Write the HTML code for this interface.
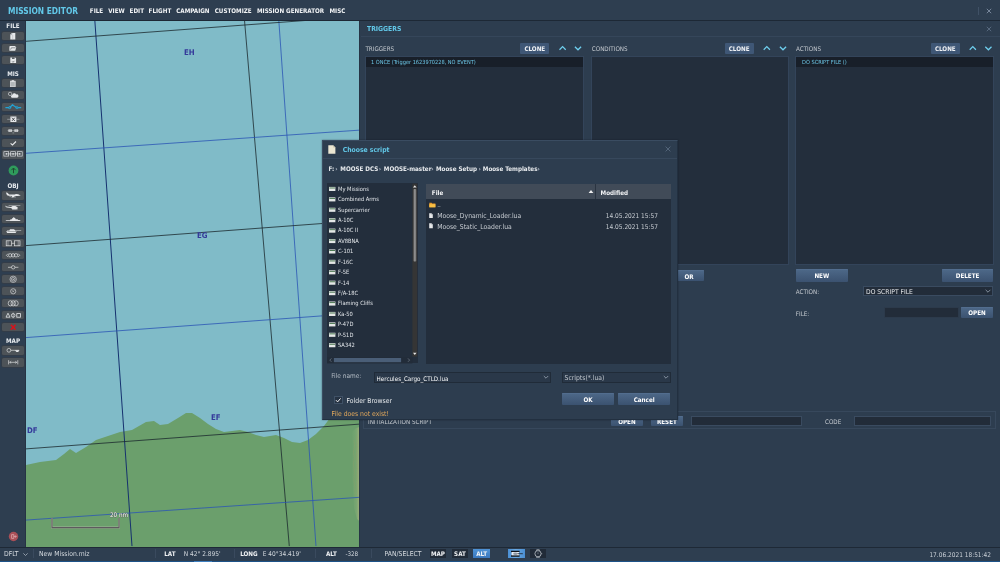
<!DOCTYPE html>
<html lang="en"><head><meta charset="utf-8"><title>Mission Editor</title>
<style>
*{box-sizing:border-box;margin:0;padding:0}
html,body{width:1000px;height:562px;overflow:hidden;background:#2e3e50;}
body{font-family:"DejaVu Sans Condensed","DejaVu Sans","Liberation Sans",sans-serif;font-stretch:condensed;color:#fff;position:relative;font-size:6.25px;line-height:1}
#root{position:absolute;left:0;top:0;width:1000px;height:562px;overflow:hidden;will-change:transform}
.a{position:absolute;white-space:nowrap}
.b{font-weight:bold}
.t{position:absolute;white-space:nowrap;line-height:10px;height:10px}
.sb{position:absolute;left:1.7px;width:22.2px;height:8.5px;background:#4d5358;border-radius:1.6px;box-shadow:0 0 0 .7px #363d45}
.sb svg{position:absolute;left:0;top:0;width:22.2px;height:8.5px}
.sl{position:absolute;left:0;width:26px;text-align:center;font-weight:bold;font-size:6.25px;line-height:8px;color:#e8ecf0}
.btn{position:absolute;background:linear-gradient(#4e6989,#3b5270);box-shadow:inset 0 .6px 0 #587394;color:#fff;font-weight:bold;text-align:center;font-size:6.25px;border-radius:1px}
.clone{position:absolute;background:#3f5776;color:#f0f2f5;font-weight:bold;text-align:center;font-size:6.25px;height:10.6px;line-height:12px;width:29px;border-radius:1px}
.lb{position:absolute;background:#232e3c;border:.8px solid #33445a}
.inp{position:absolute;background:#222c39;border:1px solid #3a4b60}
.lab{position:absolute;color:#c3c8ce;font-size:6.25px;white-space:nowrap;line-height:8px}
</style></head>
<body>
<div id="root">
<div class="a" style="left:0;top:0;width:1000px;height:21px;background:#2e3e50;border-bottom:1.5px solid #1d2835"></div>
<div class="a b" style="left:8px;top:5.5px;font-size:8.33px;line-height:10px;color:#62c8e8">MISSION EDITOR</div>
<div class="a b" style="left:89.8px;top:6.6px;font-size:6.25px;line-height:8px;color:#f2f4f6">FILE</div>
<div class="a b" style="left:108.2px;top:6.6px;font-size:6.25px;line-height:8px;color:#f2f4f6">VIEW</div>
<div class="a b" style="left:129.6px;top:6.6px;font-size:6.25px;line-height:8px;color:#f2f4f6">EDIT</div>
<div class="a b" style="left:148.6px;top:6.6px;font-size:6.25px;line-height:8px;color:#f2f4f6">FLIGHT</div>
<div class="a b" style="left:176.2px;top:6.6px;font-size:6.25px;line-height:8px;color:#f2f4f6">CAMPAIGN</div>
<div class="a b" style="left:214.7px;top:6.6px;font-size:6.25px;line-height:8px;color:#f2f4f6">CUSTOMIZE</div>
<div class="a b" style="left:257px;top:6.6px;font-size:6.25px;line-height:8px;color:#f2f4f6">MISSION GENERATOR</div>
<div class="a b" style="left:329.5px;top:6.6px;font-size:6.25px;line-height:8px;color:#f2f4f6">MISC</div>
<div class="a" style="left:978px;top:7.4px;width:1px;height:7.6px;background:#405166"></div>
<svg class="a" style="left:985.4px;top:7.4px" width="8" height="8" viewBox="0 0 8 8"><path d="M1.8 1.8L6.2 6.2M6.2 1.8L1.8 6.2" stroke="#8595aa" stroke-width="0.85" fill="none"/></svg>
<svg class="a" style="left:26px;top:20.9px" width="333.3" height="525.7" viewBox="26 20.9 333.3 525.7">
<rect x="26" y="20" width="334" height="527" fill="#80bbc8"/>
<path d="M26 464.8 L40 462 L56 460 L64 454 L70 448.8 L76 452.8 L86 447 L96 440 L108 436 L120 432 L132 430 L146 422 L154 420.8 L160 424.8 L168 424 L178 418 L186 412.8 L192 413 L200 418 L208 424 L216 428.8 L224 432 L232 431 L240 430 L248 432 L256 435 L264 436.8 L276 435 L284 438 L292 442 L300 443 L308 440 L316 434 L324 426 L330 418 L336 408 L345 398 L360 390 L360 547 L26 547 Z" fill="#6b9f6c"/>
<defs><linearGradient id="ter" x1="0" x2="1" y1="0" y2="0"><stop offset="0" stop-color="#8fb37c" stop-opacity="0"/><stop offset=".6" stop-color="#8fb37c" stop-opacity=".35"/><stop offset="1" stop-color="#b0b27e" stop-opacity=".8"/></linearGradient></defs>
<path d="M352 432 L356 428 L359.4 427 V521 L357 519 L354 508 L353 490 L351.5 470 L352.5 450 Z" fill="url(#ter)"/>
<path d="M354 440 q1.5 6 -.5 12 q2 6 0 12 q1.6 8 .4 16 q1.4 8 1.2 16 M356.6 436 q1.2 10 0 20 q1.4 12 .2 24 q1 10 .6 20" fill="none" stroke="#9c9a66" stroke-width=".4" opacity=".7"/>
<g fill="none" stroke-width="0.8">
<line x1="94.8" y1="20" x2="132" y2="546" stroke="#15306e" stroke-width="1"/>
<line x1="244.5" y1="20" x2="289.3" y2="546" stroke="#1c2a2e"/>
<line x1="278.8" y1="20" x2="316" y2="546" stroke="#2b56b5"/>
<line x1="26" y1="41.2" x2="360" y2="16.3" stroke="#1c2a2e"/>
<line x1="26" y1="153.2" x2="360" y2="130" stroke="#2b56b5"/>
<line x1="26" y1="245.5" x2="360" y2="220.6" stroke="#1c2a2e"/>
<line x1="26" y1="337.5" x2="360" y2="313" stroke="#2b56b5"/>
<line x1="26" y1="448.8" x2="360" y2="424" stroke="#1c2a2e"/>
<line x1="26" y1="520" x2="360" y2="497.2" stroke="#2b56b5"/>
</g>
<g font-family="'DejaVu Sans Condensed','DejaVu Sans',sans-serif" font-size="7.8" font-weight="bold" fill="#34399a">
<text x="184" y="55.1">EH</text>
<text x="197" y="238.4">EG</text>
<text x="211" y="420">EF</text>
<text x="27" y="433">DF</text>
</g>
<path d="M52 518 V527.5 H119 V518" fill="none" stroke="#d8c8c8" stroke-width="2" opacity="0.5"/>
<path d="M52 518 V527.5 H119 V518" fill="none" stroke="#5e5a5e" stroke-width="1.1"/>
<text x="110" y="516.5" font-family="'DejaVu Sans Condensed','DejaVu Sans',sans-serif" font-size="6.3" fill="#ffffff" stroke="#5a625a" stroke-width="0.7" paint-order="stroke">20 nm</text>
</svg>

<div class="a" style="left:0;top:21px;width:26px;height:526px;background:#2e3e50;border-right:1px solid #263344"></div>
<div class="sl" style="top:21.8px">FILE</div>
<div class="sb" style="top:31.6px"><svg viewBox="0 0 22.2 8.5"><path d="M9.9 1H13.3V7.4H8.3V2.6z" fill="#e6e8ea"/><path d="M9.9 1V2.6H8.3" fill="none" stroke="#8a9096" stroke-width=".5"/><path d="M10.7 3V7" stroke="#a9aeb3" stroke-width=".5"/></svg></div>
<div class="sb" style="top:43.58px"><svg viewBox="0 0 22.2 8.5"><path d="M7.4 2.6L8.2 2H13L14.2 3.2V3.6L13.2 6.7H7.4z" fill="#e6e8ea"/><path d="M8.6 5.6L9.4 3.8H13.6" fill="none" stroke="#4d5358" stroke-width=".6"/></svg></div>
<div class="sb" style="top:55.56px"><svg viewBox="0 0 22.2 8.5"><path d="M8.3 1.4H13.2L14.1 2.3V7.1H8.3z" fill="#e6e8ea"/><rect x="10" y="1.4" width="2.6" height="1.5" fill="#4d5358"/><path d="M10.2 5.4L11 6.3L12.4 4.9" fill="none" stroke="#4d5358" stroke-width=".7"/></svg></div>
<div class="sl" style="top:70px">MIS</div>
<div class="sb" style="top:78.6px"><svg viewBox="0 0 22.2 8.5"><rect x="8.3" y="2" width="5" height="5.8" fill="#c9ccce"/><rect x="9.7" y="1.2" width="2.2" height="1.4" fill="#e6e8ea"/><path d="M9 3.6h3.6M9 4.6h3.6M9 5.6h3.6M9 6.6h3.6" stroke="#8e9499" stroke-width=".4"/><rect x="8.3" y="2" width="5" height="5.8" fill="none" stroke="#e6e8ea" stroke-width=".5"/></svg></div>
<div class="sb" style="top:90.58px"><svg viewBox="0 0 22.2 8.5"><circle cx="8.1" cy="2.9" r="1.7" fill="none" stroke="#e6e8ea" stroke-width=".6"/><path d="M10 6.8a1.5 1.5 0 0 1 .2-2.9a2.2 2.2 0 0 1 4-.5a1.7 1.7 0 0 1 1 3.4z" fill="#e6e8ea"/></svg></div>
<div class="sb" style="top:102.56px"><svg viewBox="0 0 22.2 8.5"><path d="M3.4 4.7H7.6L10.4 2L15 4.7H19.2" fill="none" stroke="#21a4d6" stroke-width="1.2"/><g fill="#21a4d6"><path d="M7.6 3.1L9.6 4.7L7.6 6.3L5.6 4.7z"/><path d="M15 3.1L17 4.7L15 6.3L13 4.7z"/><circle cx="10.6" cy="2.1" r=".9"/></g><g fill="#4d5358"><circle cx="7.6" cy="4.7" r=".55"/><circle cx="15" cy="4.7" r=".55"/></g></svg></div>
<div class="sb" style="top:114.53999999999999px"><svg viewBox="0 0 22.2 8.5"><path d="M5.2 4.3H8.4M14.4 4.3H17.5" stroke="#b9bdc1" stroke-width=".6"/><rect x="8.4" y="1.5" width="6" height="5.5" fill="#e6e8ea"/><path d="M10 2.7l2.8 3.2M12.8 2.7L10 5.9" stroke="#3c4247" stroke-width=".9"/></svg></div>
<div class="sb" style="top:126.52px"><svg viewBox="0 0 22.2 8.5"><rect x="6.4" y="2.4" width="3.5" height="2.4" fill="#e6e8ea"/><rect x="12.4" y="2.4" width="3.7" height="2.4" fill="#e6e8ea"/><path d="M5.6 3.6h11.2M10.4 5.9h1.8" stroke="#c5c8cb" stroke-width=".5"/><path d="M8.1 2.4v2.4M14.2 2.4v2.4" stroke="#7d8388" stroke-width=".4"/></svg></div>
<div class="sb" style="top:138.5px"><svg viewBox="0 0 22.2 8.5"><path d="M8.6 4.3L10.5 6L14 2.5" fill="none" stroke="#e6e8ea" stroke-width="1.1"/></svg></div>
<div class="sb" style="top:150.48px"><svg viewBox="0 0 22.2 8.5"><g fill="none" stroke="#e6e8ea" stroke-width=".65"><rect x="1.9" y="1.7" width="4.8" height="4.4"/><rect x="8.7" y="1.7" width="4.8" height="4.4"/><rect x="15.4" y="1.7" width="4.8" height="4.4"/><path d="M4.3 3.9h13.6"/></g><g fill="#e6e8ea"><rect x="3.6" y="3.2" width="1.4" height="1.4"/><rect x="10.4" y="3.2" width="1.4" height="1.4"/><rect x="17.1" y="3.2" width="1.4" height="1.4"/></g></svg></div>
<svg class="a" style="left:7.6px;top:165.4px" width="11" height="11" viewBox="0 0 11 11"><circle cx="5.5" cy="5.5" r="4.9" fill="#2f9b5c"/><path d="M5.5 8.2V3.2M3.4 5.2L5.5 3L7.6 5.2" fill="none" stroke="#1d4a30" stroke-width="1"/></svg>
<div class="sl" style="top:181.5px">OBJ</div>
<div class="sb" style="top:191.0px"><svg viewBox="0 0 22.2 8.5"><path d="M3.9 1.5L5.4 1.7L7.2 3.6L12.6 3.6L14 2.9L16.2 3.3L18.8 4.6L16 5L13 5L11.4 6.6H9.4L10.2 5L6.6 4.8L5 4.3z" fill="#e6e8ea"/><path d="M7.4 5.6h2M12 6h2" stroke="#e6e8ea" stroke-width=".5"/></svg></div>
<div class="sb" style="top:202.98px"><svg viewBox="0 0 22.2 8.5"><path d="M6.6 2.5H18.4" stroke="#d0d3d6" stroke-width=".5"/><path d="M3.6 2.4L4.6 3.6L9 4L10.6 2.9H13.4L15.6 4.2L15.8 5.4L14 6.2H10.6L9 5L5 4.6L3.6 4z" fill="#e6e8ea"/><path d="M10 6.5h5.6" stroke="#e6e8ea" stroke-width=".4"/></svg></div>
<div class="sb" style="top:214.96px"><svg viewBox="0 0 22.2 8.5"><path d="M3.4 5.2H8L8.6 4.2H10L10.4 3H11.2L11.6 2.1H12.1L12.4 3H13.2L13.6 4.2H15.6L16.2 5H18.8L17.6 6.1H4.4z" fill="#e6e8ea"/></svg></div>
<div class="sb" style="top:226.94px"><svg viewBox="0 0 22.2 8.5"><path d="M4.3 4.6L5.3 3.4H7.4L8 2.3H12L12.8 3H19.2V3.6H13L13.4 4.2H14.6L13.6 6.1H5.2z" fill="#e6e8ea"/><path d="M5.4 4.5H14" stroke="#4d5358" stroke-width=".4"/></svg></div>
<div class="sb" style="top:238.92000000000002px"><svg viewBox="0 0 22.2 8.5"><g fill="none" stroke="#e6e8ea" stroke-width=".65"><rect x="4.2" y="1.8" width="5.4" height="5"/><rect x="12.6" y="1.8" width="5.4" height="5"/><path d="M9.6 4.3h3"/><path d="M6 1.8v5M16.2 1.8v5" stroke-width=".45"/></g></svg></div>
<div class="sb" style="top:250.9px"><svg viewBox="0 0 22.2 8.5"><g fill="none" stroke="#e6e8ea" stroke-width=".65"><circle cx="8.2" cy="4.3" r="1.7"/><circle cx="11.1" cy="4.3" r="1.7"/><circle cx="14" cy="4.3" r="1.7"/><path d="M6.2 2.5L4.4 4.3L6.2 6.1M16 2.5L17.8 4.3L16 6.1"/></g></svg></div>
<div class="sb" style="top:262.88px"><svg viewBox="0 0 22.2 8.5"><g fill="none" stroke="#e6e8ea" stroke-width=".65"><path d="M6 4.3h3.5M12.9 4.3h3.5"/><circle cx="11.2" cy="4.3" r="1.7"/></g></svg></div>
<div class="sb" style="top:274.86px"><svg viewBox="0 0 22.2 8.5"><g fill="none" stroke="#e6e8ea" stroke-width=".6"><circle cx="11.2" cy="4.3" r="3.2"/><circle cx="11.2" cy="4.3" r="1.8"/></g><circle cx="11.2" cy="4.3" r=".6" fill="#e6e8ea"/></svg></div>
<div class="sb" style="top:286.84000000000003px"><svg viewBox="0 0 22.2 8.5"><g fill="none" stroke="#e6e8ea" stroke-width=".6"><circle cx="11.2" cy="4.3" r="2.6"/><path d="M10.2 3.3l2 2M12.2 3.3l-2 2" stroke-width=".5"/></g></svg></div>
<div class="sb" style="top:298.82px"><svg viewBox="0 0 22.2 8.5"><g fill="none" stroke="#e6e8ea" stroke-width=".65"><ellipse cx="8.4" cy="4.3" rx="2.2" ry="2.6"/><ellipse cx="11.2" cy="4.3" rx="2.2" ry="2.6"/><ellipse cx="14" cy="4.3" rx="2.2" ry="2.6"/></g></svg></div>
<div class="sb" style="top:310.8px"><svg viewBox="0 0 22.2 8.5"><g fill="none" stroke="#e6e8ea" stroke-width=".8"><path d="M6 2.2L8 6.2H4z"/><circle cx="11.2" cy="4.4" r="1.8"/><rect x="14.8" y="2.6" width="3.6" height="3.6"/></g><path d="M11.2 1.6v5.6" stroke="#e6e8ea" stroke-width=".45"/></svg></div>
<div class="sb" style="top:322.78px"><svg viewBox="0 0 22.2 8.5"><path d="M8.9 1.8l4.6 5M13.5 1.8l-4.6 5" stroke="#d8121b" stroke-width="1.5"/></svg></div>
<div class="sl" style="top:336.9px">MAP</div>
<div class="sb" style="top:346.2px"><svg viewBox="0 0 22.2 8.5"><g fill="none" stroke="#e6e8ea" stroke-width=".65"><circle cx="6.9" cy="4.3" r="1.9"/><path d="M8.8 4.3h8.4"/></g><path d="M13 4.3h4.4l-1.2 1.7h-1.8z" fill="#e6e8ea"/></svg></div>
<div class="sb" style="top:358.18px"><svg viewBox="0 0 22.2 8.5"><g fill="none" stroke="#e6e8ea" stroke-width=".65"><path d="M6.6 2.2v4.2M15.8 2.2v4.2M7.4 4.3h7.6"/><path d="M9.2 3.1L7.8 4.3l1.4 1.2M13.2 3.1l1.4 1.2l-1.4 1.2" stroke-width=".55"/></g></svg></div>
<svg class="a" style="left:7.5px;top:530.5px" width="11" height="11" viewBox="0 0 11 11"><circle cx="5.5" cy="5.5" r="4.7" fill="#a94f57"/><path d="M3.6 3.6h2.2v3.8H3.6zM5.8 5.5h2.4M7.2 4.4l1.1 1.1l-1.1 1.1" fill="none" stroke="#e2b0b5" stroke-width=".7"/></svg>
<div class="a" style="left:359.2px;top:20.5px;width:641px;height:526px;background:#2d3d4f;border-left:1px solid #263445"></div>
<div class="a b" style="left:367px;top:24.5px;font-size:6.77px;line-height:8px;color:#62c8e8">TRIGGERS</div>
<div class="a" style="left:360.5px;top:36px;width:640px;height:1px;background:#35465a"></div>
<svg class="a" style="left:985.4px;top:24.5px" width="8" height="8" viewBox="0 0 8 8"><path d="M1.8 1.8L6.2 6.2M6.2 1.8L1.8 6.2" stroke="#62738a" stroke-width="0.8" fill="none"/></svg>
<div class="lab" style="left:365.4px;top:45.3px">TRIGGERS</div>
<div class="clone" style="left:520.3px;top:43px">CLONE</div>
<div class="lb" style="left:365.2px;top:56.2px;width:218.80000000000004px;height:209.2px"></div>
<div class="a" style="left:366px;top:57px;width:217.20000000000005px;height:9.8px;background:#181f29"></div>
<div class="a" style="left:371px;top:58px;font-size:5.6px;line-height:8px;color:#6cc6e6">1 ONCE (Trigger 1623970228, NO EVENT)</div>
<div class="lab" style="left:591.8px;top:45.3px">CONDITIONS</div>
<div class="clone" style="left:724.6px;top:43px">CLONE</div>
<div class="lb" style="left:590.8000000000001px;top:56.2px;width:198.39999999999995px;height:209.2px"></div>
<div class="lab" style="left:796px;top:45.3px">ACTIONS</div>
<div class="clone" style="left:930.8px;top:43px">CLONE</div>
<div class="lb" style="left:795.2px;top:56.2px;width:198.80000000000004px;height:209.2px"></div>
<div class="a" style="left:796px;top:57px;width:197.20000000000005px;height:9.8px;background:#181f29"></div>
<div class="a" style="left:802px;top:58px;font-size:5.6px;line-height:8px;color:#6cc6e6">DO SCRIPT FILE ()</div>
<svg class="a" style="left:0;top:0" width="1000" height="60" viewBox="0 0 1000 60"><path d="M559.5 49.7L562.6 46.6L565.7 49.7" fill="none" stroke="#6fcfee" stroke-width="1.25"/><path d="M574.9 46.699999999999996L578 49.8L581.1 46.699999999999996" fill="none" stroke="#6fcfee" stroke-width="1.25"/><path d="M763.6999999999999 49.7L766.8 46.6L769.9 49.7" fill="none" stroke="#6fcfee" stroke-width="1.25"/><path d="M779.9 46.699999999999996L783 49.8L786.1 46.699999999999996" fill="none" stroke="#6fcfee" stroke-width="1.25"/><path d="M969.6999999999999 49.7L972.8 46.6L975.9 49.7" fill="none" stroke="#6fcfee" stroke-width="1.25"/><path d="M985.3 46.699999999999996L988.4 49.8L991.5 46.699999999999996" fill="none" stroke="#6fcfee" stroke-width="1.25"/></svg>
<div class="btn" style="left:674px;top:270.2px;width:30.200000000000045px;height:11.199999999999989px;line-height:12.99999999999999px;font-size:6.25px">OR</div>
<div class="btn" style="left:795.8px;top:269.3px;width:52.0px;height:12.5px;line-height:14.3px;font-size:6.25px">NEW</div>
<div class="btn" style="left:941.7px;top:269.3px;width:51.69999999999993px;height:12.5px;line-height:14.3px;font-size:6.25px">DELETE</div>
<div class="lab" style="left:795.8px;top:287.5px">ACTION:</div>
<div class="inp" style="left:863.2px;top:285.8px;width:129.8px;height:10.4px"></div>
<div class="a" style="left:866px;top:287.6px;font-size:6.7px;line-height:8px;color:#e4e7ea">DO SCRIPT FILE</div>
<svg class="a" style="left:984.4px;top:287.6px" width="8" height="6" viewBox="0 0 8 6"><path d="M1.6 1.8L4 4.2L6.4 1.8" fill="none" stroke="#9aa6b4" stroke-width=".8"/></svg>
<div class="lab" style="left:795.8px;top:309.9px">FILE:</div>
<div class="inp" style="left:883.9px;top:307.4px;width:74.8px;height:10.6px;border-color:#2c3a4b"></div>
<div class="btn" style="left:961px;top:307.4px;width:32px;height:10.600000000000023px;line-height:12.400000000000023px;font-size:6.25px">OPEN</div>
<div class="a" style="left:363.4px;top:411.2px;width:632.4px;height:18px;border:1px solid #37485c"></div>
<div class="lab" style="left:368px;top:417.7px">INITIALIZATION SCRIPT</div>
<div class="btn" style="left:610.8px;top:415.6px;width:32.200000000000045px;height:10.399999999999977px;line-height:12.199999999999978px;font-size:6.25px">OPEN</div>
<div class="btn" style="left:650.8px;top:415.6px;width:32.200000000000045px;height:10.399999999999977px;line-height:12.199999999999978px;font-size:6.25px">RESET</div>
<div class="inp" style="left:691px;top:416px;width:111px;height:9.8px"></div>
<div class="lab" style="left:825px;top:417.7px">CODE</div>
<div class="inp" style="left:854.4px;top:416px;width:136.4px;height:9.8px"></div>
<div class="a" style="left:322.2px;top:140.4px;width:355.6px;height:279.4px;background:#2d3d4f;border:1px solid;border-color:#3a4c61 #223040 #223040 #3a4c61;box-shadow:0 0 1.5px rgba(10,16,24,.5)"></div>
<svg class="a" style="left:327.6px;top:145.2px" width="8" height="9" viewBox="0 0 8 9"><path d="M.3 .3H5.2L7.4 2.5V8.7H.3z" fill="#ebe6d2"/><path d="M5.2 .3V2.5H7.4" fill="#c9c3ab"/></svg>
<div class="a b" style="left:342.8px;top:146px;font-size:6.77px;line-height:8px;color:#62c8e8">Choose script</div>
<svg class="a" style="left:663.6px;top:145.4px" width="8" height="8" viewBox="0 0 8 8"><path d="M1.6 1.6L6.4 6.4M6.4 1.6L1.6 6.4" stroke="#5d6e84" stroke-width="0.8" fill="none"/></svg>
<div class="a" style="left:323.2px;top:158px;width:353.6px;height:1px;background:#37485c"></div>
<div class="a b" style="left:328.6px;top:164.7px;font-size:6.25px;line-height:8px;color:#e8ebee">F:</div>
<div class="a b" style="left:340.3px;top:164.7px;font-size:6.25px;line-height:8px;color:#e8ebee">MOOSE DCS</div>
<div class="a b" style="left:383.8px;top:164.7px;font-size:6.25px;line-height:8px;color:#e8ebee">MOOSE-master</div>
<div class="a b" style="left:436px;top:164.7px;font-size:6.25px;line-height:8px;color:#e8ebee">Moose Setup</div>
<div class="a b" style="left:482.8px;top:164.7px;font-size:6.25px;line-height:8px;color:#e8ebee">Moose Templates</div>
<div class="a b" style="left:335.2px;top:164.7px;font-size:6.25px;line-height:8px;color:#b4bdc8">›</div>
<div class="a b" style="left:378.8px;top:164.7px;font-size:6.25px;line-height:8px;color:#b4bdc8">›</div>
<div class="a b" style="left:431.2px;top:164.7px;font-size:6.25px;line-height:8px;color:#b4bdc8">›</div>
<div class="a b" style="left:478.6px;top:164.7px;font-size:6.25px;line-height:8px;color:#b4bdc8">›</div>
<div class="a b" style="left:537.4px;top:164.7px;font-size:6.25px;line-height:8px;color:#b4bdc8">›</div>
<div class="a" style="left:327px;top:183px;width:91px;height:180.4px;background:#232e3c"></div>
<div class="a" style="left:338px;top:184.80px;font-size:5.73px;line-height:8px;color:#e0e4e8">My Missions</div>
<div class="a" style="left:338px;top:195.22px;font-size:5.73px;line-height:8px;color:#e0e4e8">Combined Arms</div>
<div class="a" style="left:338px;top:205.63px;font-size:5.73px;line-height:8px;color:#e0e4e8">Supercarrier</div>
<div class="a" style="left:338px;top:216.05px;font-size:5.73px;line-height:8px;color:#e0e4e8">A-10C</div>
<div class="a" style="left:338px;top:226.47px;font-size:5.73px;line-height:8px;color:#e0e4e8">A-10C II</div>
<div class="a" style="left:338px;top:236.89px;font-size:5.73px;line-height:8px;color:#e0e4e8">AV8BNA</div>
<div class="a" style="left:338px;top:247.30px;font-size:5.73px;line-height:8px;color:#e0e4e8">C-101</div>
<div class="a" style="left:338px;top:257.72px;font-size:5.73px;line-height:8px;color:#e0e4e8">F-16C</div>
<div class="a" style="left:338px;top:268.14px;font-size:5.73px;line-height:8px;color:#e0e4e8">F-5E</div>
<div class="a" style="left:338px;top:278.55px;font-size:5.73px;line-height:8px;color:#e0e4e8">F-14</div>
<div class="a" style="left:338px;top:288.97px;font-size:5.73px;line-height:8px;color:#e0e4e8">F/A-18C</div>
<div class="a" style="left:338px;top:299.39px;font-size:5.73px;line-height:8px;color:#e0e4e8">Flaming Cliffs</div>
<div class="a" style="left:338px;top:309.80px;font-size:5.73px;line-height:8px;color:#e0e4e8">Ka-50</div>
<div class="a" style="left:338px;top:320.22px;font-size:5.73px;line-height:8px;color:#e0e4e8">P-47D</div>
<div class="a" style="left:338px;top:330.64px;font-size:5.73px;line-height:8px;color:#e0e4e8">P-51D</div>
<div class="a" style="left:338px;top:341.06px;font-size:5.73px;line-height:8px;color:#e0e4e8">SA342</div>
<svg class="a" style="left:0;top:0" width="1000" height="562" viewBox="0 0 1000 562" pointer-events="none"><rect x="329" y="186.90" width="6.4" height="4.1" fill="#e4e7e6"/><rect x="329.4" y="187.50" width="5.6" height="1" fill="#4b7852"/><rect x="329" y="197.32" width="6.4" height="4.1" fill="#e4e7e6"/><rect x="329.4" y="197.92" width="5.6" height="1" fill="#4b7852"/><rect x="329" y="207.73" width="6.4" height="4.1" fill="#e4e7e6"/><rect x="329.4" y="208.33" width="5.6" height="1" fill="#4b7852"/><rect x="329" y="218.15" width="6.4" height="4.1" fill="#e4e7e6"/><rect x="329.4" y="218.75" width="5.6" height="1" fill="#4b7852"/><rect x="329" y="228.57" width="6.4" height="4.1" fill="#e4e7e6"/><rect x="329.4" y="229.17" width="5.6" height="1" fill="#4b7852"/><rect x="329" y="238.99" width="6.4" height="4.1" fill="#e4e7e6"/><rect x="329.4" y="239.59" width="5.6" height="1" fill="#4b7852"/><rect x="329" y="249.40" width="6.4" height="4.1" fill="#e4e7e6"/><rect x="329.4" y="250.00" width="5.6" height="1" fill="#4b7852"/><rect x="329" y="259.82" width="6.4" height="4.1" fill="#e4e7e6"/><rect x="329.4" y="260.42" width="5.6" height="1" fill="#4b7852"/><rect x="329" y="270.24" width="6.4" height="4.1" fill="#e4e7e6"/><rect x="329.4" y="270.84" width="5.6" height="1" fill="#4b7852"/><rect x="329" y="280.65" width="6.4" height="4.1" fill="#e4e7e6"/><rect x="329.4" y="281.25" width="5.6" height="1" fill="#4b7852"/><rect x="329" y="291.07" width="6.4" height="4.1" fill="#e4e7e6"/><rect x="329.4" y="291.67" width="5.6" height="1" fill="#4b7852"/><rect x="329" y="301.49" width="6.4" height="4.1" fill="#e4e7e6"/><rect x="329.4" y="302.09" width="5.6" height="1" fill="#4b7852"/><rect x="329" y="311.90" width="6.4" height="4.1" fill="#e4e7e6"/><rect x="329.4" y="312.50" width="5.6" height="1" fill="#4b7852"/><rect x="329" y="322.32" width="6.4" height="4.1" fill="#e4e7e6"/><rect x="329.4" y="322.92" width="5.6" height="1" fill="#4b7852"/><rect x="329" y="332.74" width="6.4" height="4.1" fill="#e4e7e6"/><rect x="329.4" y="333.34" width="5.6" height="1" fill="#4b7852"/><rect x="329" y="343.15" width="6.4" height="4.1" fill="#e4e7e6"/><rect x="329.4" y="343.75" width="5.6" height="1" fill="#4b7852"/><rect x="412.4" y="183.6" width="4.8" height="173" fill="#353535"/><defs><linearGradient id="vth" x1="0" x2="1" y1="0" y2="0"><stop offset="0" stop-color="#5c5c5c"/><stop offset=".5" stop-color="#9a9a9a"/><stop offset="1" stop-color="#5c5c5c"/></linearGradient></defs><rect x="413.3" y="189" width="3.1" height="72.4" rx="1" fill="url(#vth)"/><path d="M413 187.4L414.8 185.2L416.6 187.4z" fill="#e8e8e8"/><path d="M413 352.8L414.8 355L416.6 352.8z" fill="#e8e8e8"/><rect x="327" y="357" width="85.4" height="6.4" fill="#222c39"/><rect x="333.9" y="358" width="67.2" height="4.2" fill="#4a5e77"/><path d="M331.4 358.4L329.8 360.1L331.4 361.8M408 358.4L409.6 360.1L408 361.8" fill="none" stroke="#7f8b99" stroke-width=".6"/></svg>
<div class="a" style="left:426.4px;top:183.6px;width:244.2px;height:180px;background:#232e3c"></div>
<div class="a" style="left:426.4px;top:184px;width:244.2px;height:15px;background:#414b58"></div>
<div class="a" style="left:594.8px;top:184px;width:1px;height:15px;background:#2a3441"></div>
<div class="a b" style="left:431.8px;top:188.8px;font-size:6.25px;line-height:8px;color:#f2f3f5">File</div>
<div class="a b" style="left:600.6px;top:188.8px;font-size:6.25px;line-height:8px;color:#f2f3f5">Modified</div>
<svg class="a" style="left:588px;top:188.6px" width="6" height="5" viewBox="0 0 6 5"><path d="M.6 4L3 .9L5.4 4z" fill="#f0f0f0"/></svg>
<svg class="a" style="left:428.6px;top:201.6px" width="7" height="6" viewBox="0 0 7 6"><path d="M.3 .8H2.6L3.2 1.5H6.4V5.3H.3z" fill="#e89a2e"/><path d="M.3 2.2H6.4V5.3H.3z" fill="#f6bf45"/></svg>
<div class="a" style="left:437.2px;top:201.4px;font-size:6.25px;line-height:8px;color:#c8cdd3">..</div>
<svg class="a" style="left:429px;top:212.50px" width="4" height="5.4" viewBox="0 0 4 5.4"><path d="M.2 .2H2.4L3.8 1.6V5.2H.2z" fill="#e4e6e8"/><path d="M2.4 .2V1.6H3.8" fill="#9aa2aa"/></svg>
<div class="a" style="left:437.2px;top:211.60px;font-size:6.77px;line-height:8px;color:#c8cdd3">Moose_Dynamic_Loader.lua</div>
<div class="a" style="left:605.8px;top:211.60px;font-size:6.5px;line-height:8px;color:#c8cdd3">14.05.2021 15:57</div>
<svg class="a" style="left:429px;top:223.44px" width="4" height="5.4" viewBox="0 0 4 5.4"><path d="M.2 .2H2.4L3.8 1.6V5.2H.2z" fill="#e4e6e8"/><path d="M2.4 .2V1.6H3.8" fill="#9aa2aa"/></svg>
<div class="a" style="left:437.2px;top:222.54px;font-size:6.77px;line-height:8px;color:#c8cdd3">Moose_Static_Loader.lua</div>
<div class="a" style="left:605.8px;top:222.54px;font-size:6.5px;line-height:8px;color:#c8cdd3">14.05.2021 15:57</div>
<div class="a" style="left:331.2px;top:372.1px;font-size:6.5px;line-height:8px;color:#b4bcc5">File name:</div>
<div class="a" style="left:373.8px;top:371.6px;width:176.8px;height:11.8px;background:#2a3849;border:1px solid #202b38"></div>
<div class="a" style="left:376.6px;top:374.5px;font-size:6.25px;line-height:8px;color:#f4f5f6">Hercules_Cargo_CTLD.lua</div>
<div class="a" style="left:562px;top:371.6px;width:108.6px;height:11.8px;background:#2a3849;border:1px solid #202b38"></div>
<div class="a" style="left:564.6px;top:373.6px;font-size:6.77px;line-height:8px;color:#c0c6cd">Scripts(*.lua)</div>
<svg class="a" style="left:541.6px;top:374.4px" width="8" height="6" viewBox="0 0 8 6"><path d="M1.8 2L4 4.2L6.2 2" fill="none" stroke="#9aa6b4" stroke-width=".8"/></svg>
<svg class="a" style="left:661.9px;top:374.4px" width="8" height="6" viewBox="0 0 8 6"><path d="M1.8 2L4 4.2L6.2 2" fill="none" stroke="#9aa6b4" stroke-width=".8"/></svg>
<div class="a" style="left:334px;top:395.8px;width:8.5px;height:8.5px;background:#263343;border:1px solid #3f5166"></div>
<svg class="a" style="left:334px;top:395.8px" width="8.5" height="8.5" viewBox="0 0 8.5 8.5"><path d="M2 4.2L3.6 5.9L6.6 2.4" fill="none" stroke="#f4f4f4" stroke-width="1"/></svg>
<div class="a" style="left:346.6px;top:396.5px;font-size:6.77px;line-height:8px;color:#e6e9ec">Folder Browser</div>
<div class="a" style="left:331.6px;top:410.2px;font-size:6.77px;line-height:8px;color:#e3a95c">File does not exist!</div>
<div class="btn" style="left:562.1px;top:392.8px;width:51.89999999999998px;height:12.399999999999977px;line-height:14.199999999999978px;font-size:6.25px">OK</div>
<div class="btn" style="left:618.2px;top:392.8px;width:52.0px;height:12.399999999999977px;line-height:14.199999999999978px;font-size:6.25px">Cancel</div>
<div class="a" style="left:0;top:546.5px;width:1000px;height:16px;background:#2e3e50;border-top:1.4px solid #1e2936"></div>
<div class="a" style="left:0;top:560.6px;width:1000px;height:2px;background:#1d5288"></div>
<div class="a" style="left:193.7px;top:560.6px;width:18px;height:2px;background:#3d7fc0"></div>
<div class="a" style="left:4px;top:550px;font-size:6.77px;line-height:8px;color:#d5dadf">DFLT</div>
<svg class="a" style="left:21.6px;top:551.6px" width="7" height="5" viewBox="0 0 7 5"><path d="M1.4 1.4L3.5 3.5L5.6 1.4" fill="none" stroke="#aab4c0" stroke-width=".8"/></svg>
<div class="a" style="left:33.4px;top:549.4px;width:1px;height:9px;background:#3a4a5e"></div>
<div class="a" style="left:39px;top:550px;font-size:6.77px;line-height:8px;color:#d5dadf">New Mission.miz</div>
<div class="a" style="left:155.4px;top:549.4px;width:1px;height:9px;background:#3a4a5e"></div>
<div class="a b" style="left:164.2px;top:550.2px;font-size:6.25px;line-height:8px;color:#f0f2f4">LAT</div>
<div class="a" style="left:183.8px;top:550px;font-size:6.5px;line-height:8px;color:#d5dadf">N 42° 2.895'</div>
<div class="a" style="left:233.8px;top:549.4px;width:1px;height:9px;background:#3a4a5e"></div>
<div class="a b" style="left:240.2px;top:550.2px;font-size:6.25px;line-height:8px;color:#f0f2f4">LONG</div>
<div class="a" style="left:262.8px;top:550px;font-size:6.5px;line-height:8px;color:#d5dadf">E 40°34.419'</div>
<div class="a" style="left:314.8px;top:549.4px;width:1px;height:9px;background:#3a4a5e"></div>
<div class="a b" style="left:326px;top:550.2px;font-size:6.25px;line-height:8px;color:#f0f2f4">ALT</div>
<div class="a" style="left:345.4px;top:550.2px;font-size:6.25px;line-height:8px;color:#d5dadf">-328</div>
<div class="a" style="left:370.6px;top:549.4px;width:1px;height:9px;background:#3a4a5e"></div>
<div class="a" style="left:384.6px;top:550px;font-size:6.77px;line-height:8px;color:#d5dadf">PAN/SELECT</div>
<div class="a b" style="left:429.9px;top:549.2px;width:16.100000000000023px;height:9px;line-height:9.6px;text-align:center;font-size:6.25px;background:#212b38;color:#f2f4f6">MAP</div>
<div class="a b" style="left:452.1px;top:549.2px;width:15.799999999999955px;height:9px;line-height:9.6px;text-align:center;font-size:6.25px;background:#212b38;color:#f2f4f6">SAT</div>
<div class="a b" style="left:473.2px;top:549.2px;width:16.900000000000034px;height:9px;line-height:9.6px;text-align:center;font-size:6.25px;background:linear-gradient(#4f93d6,#3b78be);color:#f2f4f6">ALT</div>
<div class="a" style="left:507.9px;top:548.9px;width:16.9px;height:9.4px;background:linear-gradient(90deg,#4a8fd4,#6aa9e2 45%,#4a8fd4)"></div>
<svg class="a" style="left:507.9px;top:548.9px" width="16.9" height="9.4" viewBox="0 0 16.9 9.4"><path d="M3 1.7H11.6V2.9L10.6 3.6H4L3 2.9zM3 7.7H11.6V6.5L10.6 5.8H4L3 6.5z" fill="#10141a"/><rect x="3.6" y="3" width="7.4" height="3.4" fill="#e6ecf3"/><ellipse cx="7.3" cy="4.7" rx="2.1" ry="1.2" fill="#8f99a4"/><path d="M9.4 4.7H14.8" stroke="#1a2028" stroke-width=".8"/></svg>
<div class="a" style="left:529.9px;top:548.9px;width:16.1px;height:9.4px;background:#212b38"></div>
<svg class="a" style="left:529.9px;top:548.9px" width="16.1" height="9.4" viewBox="0 0 16.1 9.4"><circle cx="8" cy="4.7" r="3.1" fill="none" stroke="#a9b0b8" stroke-width=".9"/><path d="M6.4 1.9L6.7.7H9.3L9.6 1.9M6.4 7.5L6.7 8.7H9.3L9.6 7.5M11.2 4.7H12.2" fill="none" stroke="#a9b0b8" stroke-width=".8"/><path d="M8 3.4V5.2" stroke="#7f8892" stroke-width=".8"/></svg>
<div class="a" style="left:929.4px;top:551px;font-size:6.5px;line-height:8px;color:#c9cfd6">17.06.2021 18:51:42</div>
</div></body></html>
